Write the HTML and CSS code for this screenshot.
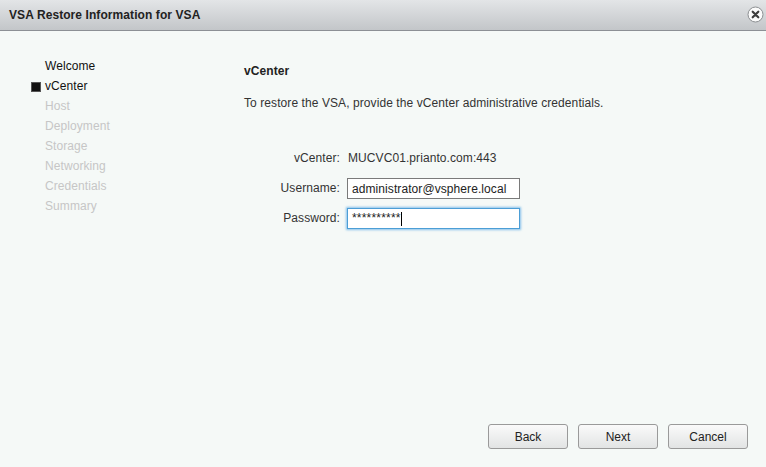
FILE: index.html
```html
<!DOCTYPE html>
<html lang="en">
<head>
  <meta charset="UTF-8">
  <title>VSA Restore Information for VSA</title>
  <link rel="stylesheet" href="styles.css">
</head>
<body>
  <div class="dialog">
    <div class="titlebar">
      <span class="title">VSA Restore Information for VSA</span>
      <span class="close-btn">
        <svg width="17" height="17" viewBox="0 0 17 17">
          <circle cx="8.5" cy="8.5" r="7.5" fill="#fbfbfb" stroke="#8c8f92" stroke-width="1"/>
          <path d="M5.7 5.7 L11.3 11.3 M11.3 5.7 L5.7 11.3" stroke="#3c3c3c" stroke-width="2.2" stroke-linecap="round"/>
        </svg>
      </span>
    </div>

    <div class="content">
      <ul class="steps">
        <li class="step done">Welcome</li>
        <li class="step current">vCenter</li>
        <li class="step">Host</li>
        <li class="step">Deployment</li>
        <li class="step">Storage</li>
        <li class="step">Networking</li>
        <li class="step">Credentials</li>
        <li class="step">Summary</li>
      </ul>

      <div class="page">
        <h2 class="page-title">vCenter</h2>
        <p class="page-desc">To restore the VSA, provide the vCenter administrative credentials.</p>

        <div class="form">
          <label class="form-label">vCenter:</label>
          <span class="form-value">MUCVC01.prianto.com:443</span>

          <label class="form-label" for="username">Username:</label>
          <input id="username" class="form-input" type="text" value="administrator@vsphere.local">

          <label class="form-label" for="password">Password:</label>
          <div class="form-input focused">**********<span class="caret"></span></div>
        </div>
      </div>
    </div>

    <div class="footer">
      <button class="btn">Back</button>
      <button class="btn">Next</button>
      <button class="btn">Cancel</button>
    </div>
  </div>
</body>
</html>
```

FILE: styles.css
```css
* {
  box-sizing: border-box;
  margin: 0;
  padding: 0;
}

body {
  font-family: 'Liberation Sans', Arial, sans-serif;
  font-size: 12px;
  letter-spacing: 0.08px;
  color: #333;
  background-color: #f5f9f7;
}

.dialog {
  display: flex;
  flex-direction: column;
  height: 467px;
}

.titlebar {
  height: 31px;
  display: flex;
  align-items: center;
  justify-content: space-between;
  padding: 0 2px 0 9px;
  background: linear-gradient(to bottom, #e3e5e7, #c3c6c9);
  border-bottom: 1px solid #8c9095;
}

.title {
  font-weight: bold;
  font-size: 12px;
  color: #222;
  margin-top: -1px;
}

.close-btn {
  display: flex;
  margin-top: -2px;
}

.content {
  flex: 1;
  display: flex;
}

.steps {
  list-style: none;
  width: 244px;
  padding: 25px 0 0 45px;
}

.step {
  position: relative;
  line-height: 20px;
  color: #c6c6c6;
}

.step.done,
.step.current {
  color: #111;
}

.step.current::before {
  content: "";
  position: absolute;
  left: -14px;
  top: 6px;
  width: 8px;
  height: 8px;
  background-color: #111;
  border: 1px solid #555;
}

.page {
  padding-top: 30px;
}

.page-title {
  font-size: 12px;
  font-weight: bold;
  color: #222;
  line-height: 20px;
}

.page-desc {
  margin-top: 12px;
  line-height: 20px;
  color: #333;
}

.form {
  display: grid;
  grid-template-columns: 96px 173px;
  column-gap: 7px;
  row-gap: 9px;
  align-items: center;
  margin-top: 35px;
}

.form-label {
  text-align: right;
  color: #333;
  line-height: 21px;
}

.form-value {
  line-height: 21px;
  padding-left: 1px;
  color: #333;
}

.form-input {
  height: 21px;
  width: 173px;
  border: 1px solid #7a7a7a;
  background-color: #fff;
  font-family: 'Liberation Sans', Arial, sans-serif;
  font-size: 12px;
  letter-spacing: 0.08px;
  color: #222;
  padding: 0 4px;
  line-height: 19px;
  outline: none;
}

.form-input.focused {
  border-color: #4c9ed6;
  box-shadow: 0 0 2px 1px rgba(90, 170, 230, 0.7);
  display: flex;
  align-items: center;
  letter-spacing: 0.2px;
}

.caret {
  display: inline-block;
  width: 1px;
  height: 14px;
  background-color: #000;
}

.footer {
  display: flex;
  justify-content: flex-end;
  gap: 10px;
  padding: 0 18px 18px 0;
}

.btn {
  width: 80px;
  height: 25px;
  border: 1px solid #9a9a9a;
  border-radius: 3px;
  background: linear-gradient(to bottom, #fafafa, #e2e4e4);
  font-family: 'Liberation Sans', Arial, sans-serif;
  font-size: 12px;
  color: #222;
}
```
